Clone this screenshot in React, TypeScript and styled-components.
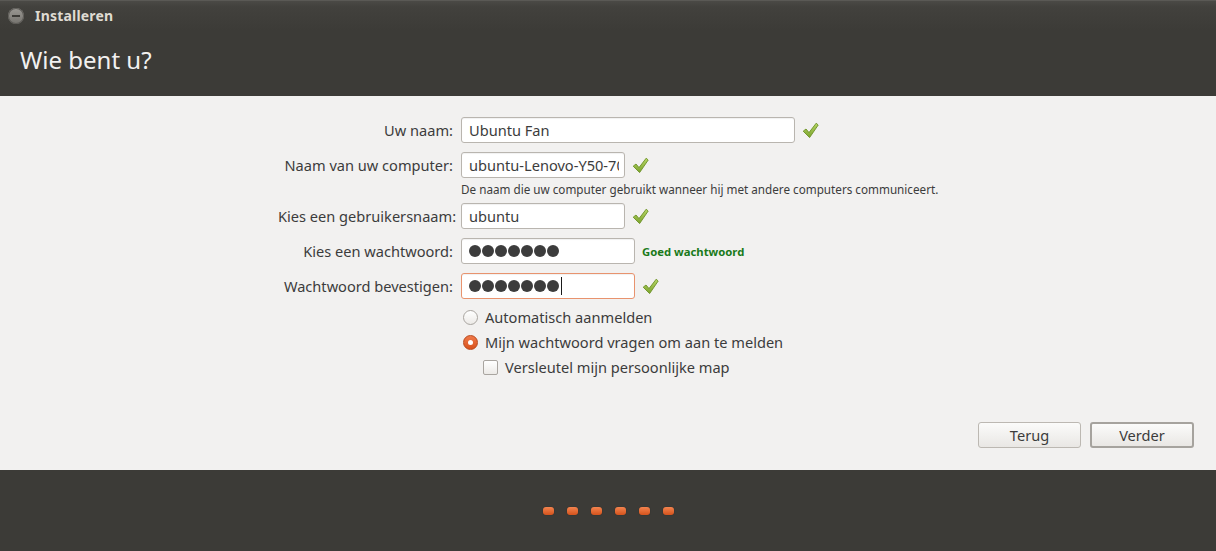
import React from "react";
import styled, { createGlobalStyle } from "styled-components";

const Global = createGlobalStyle`
  html, body { margin: 0; padding: 0; }
  body {
    width: 1216px;
    height: 551px;
    overflow: hidden;
    font-family: "Noto Sans", "DejaVu Sans", sans-serif;
    background: #f2f1f0;
    color: #3c3c3c;
  }
`;

const Window = styled.div`
  width: 1216px;
  height: 551px;
  display: flex;
  flex-direction: column;
`;

const Header = styled.header`
  height: 96px;
  background: #3c3b37;
  display: flex;
  flex-direction: column;
`;

const TitleBar = styled.div`
  height: 30px;
  display: flex;
  align-items: center;
  gap: 11px;
  padding-left: 8px;
  background: linear-gradient(#4b4a46 0px, #42413d 6px, #3c3b37 30px);
  border-top: 1px solid #5a5955;
  box-sizing: border-box;
`;

const WinButton = styled.div`
  width: 16px;
  height: 16px;
  border-radius: 50%;
  background: linear-gradient(#9a9893, #75736e);
  box-shadow: inset 0 0 0 1px #5d5b57;
  display: flex;
  align-items: center;
  justify-content: center;
  &::after {
    content: "";
    width: 8px;
    height: 2px;
    background: #3c3b37;
  }
`;

const WinTitle = styled.span`
  font-family: "Noto Sans", sans-serif;
  font-weight: 700;
  font-size: 14px;
  color: #dfdbd2;
  letter-spacing: 0.2px;
`;

const Heading = styled.h1`
  margin: 0;
  padding: 13px 0 0 20px;
  font-family: "Noto Sans", sans-serif;
  font-weight: 400;
  font-size: 24px;
  color: #f2f1f0;
`;

const Main = styled.main`
  flex: 1;
  display: flex;
  flex-direction: column;
  justify-content: space-between;
  background: #f2f1f0;
`;

const Form = styled.div`
  display: flex;
  flex-direction: column;
  padding: 21px 0 0 278px;
`;

const Row = styled.div<{ $mt?: number; $h?: number }>`
  display: flex;
  align-items: center;
  gap: 8px;
  margin-top: ${(p) => p.$mt ?? 0}px;
  height: ${(p) => p.$h ?? 26}px;
`;

const Label = styled.label`
  width: 175px;
  text-align: right;
  font-size: 14.6px;
  color: #3c3c3c;
  white-space: nowrap;
`;

const Field = styled.div<{ $indent?: number }>`
  display: flex;
  align-items: center;
  gap: 7px;
  padding-left: ${(p) => p.$indent ?? 0}px;
`;

const Input = styled.div<{ $w: number; $warn?: boolean }>`
  width: ${(p) => p.$w}px;
  height: 26px;
  box-sizing: border-box;
  border: 1px solid ${(p) => (p.$warn ? "#e8936e" : "#b9b5af")};
  border-radius: 3px;
  background: #ffffff;
  box-shadow: inset 0 1px 1px rgba(0, 0, 0, 0.06);
  display: flex;
  align-items: center;
  padding-left: 7px;
  padding-right: 5px;
  overflow: hidden;
  white-space: nowrap;
  font-size: 14.6px;
  color: #3c3c3c;
`;

const InputText = styled.span`
  display: block;
  overflow: hidden;
  white-space: nowrap;
  width: 100%;
`;

const Dots = styled.div`
  display: flex;
  align-items: center;
  gap: 1px;
`;

const Dot = styled.span`
  width: 12px;
  height: 12px;
  border-radius: 50%;
  background: #3c3c3c;
`;

const Caret = styled.span`
  width: 1px;
  height: 18px;
  background: #1a1a1a;
  margin-left: 1px;
`;

const Hint = styled.div`
  margin-left: 183px;
  margin-top: 4px;
  height: 14px;
  line-height: 14px;
  font-size: 11.7px;
  color: #3c3c3c;
`;

const Strength = styled.span`
  font-size: 11.3px;
  font-weight: 700;
  color: #1a7a1a;
`;

const Option = styled.label`
  display: flex;
  align-items: center;
  gap: 7px;
  font-size: 14.6px;
  color: #3c3c3c;
`;

const Radio = styled.span<{ $on?: boolean }>`
  width: 15px;
  height: 15px;
  box-sizing: border-box;
  border-radius: 50%;
  border: 1px solid ${(p) => (p.$on ? "#b8481c" : "#a9a5a0")};
  background: ${(p) =>
    p.$on ? "linear-gradient(#f07a4a, #d8521c)" : "linear-gradient(#ffffff, #eceae7)"};
  display: flex;
  align-items: center;
  justify-content: center;
  margin-left: 2px;
  &::after {
    content: "";
    display: ${(p) => (p.$on ? "block" : "none")};
    width: 5px;
    height: 5px;
    border-radius: 50%;
    background: #ffffff;
  }
`;

const Check = styled.span`
  width: 15px;
  height: 15px;
  box-sizing: border-box;
  border-radius: 2px;
  border: 1px solid #a9a5a0;
  background: linear-gradient(#ffffff, #eceae7);
  margin-left: 2px;
`;

const Buttons = styled.div`
  display: flex;
  justify-content: flex-end;
  gap: 9px;
  padding: 0 22px 22px 0;
`;

const Button = styled.button<{ $default?: boolean }>`
  width: ${(p) => (p.$default ? 104 : 103)}px;
  height: 26px;
  box-sizing: border-box;
  border-radius: 3px;
  border: ${(p) => (p.$default ? "2px solid #a6a39e" : "1px solid #bcb8b2")};
  background: linear-gradient(#fbfbfa, #e9e7e4);
  font-family: "Noto Sans", sans-serif;
  font-size: 14.6px;
  color: #3c3c3c;
  padding: 0;
`;

const Footer = styled.footer`
  height: 81px;
  background: #3c3b37;
  display: flex;
  justify-content: center;
  align-items: center;
  gap: 13px;
`;

const Step = styled.span`
  width: 11px;
  height: 8px;
  border-radius: 3px;
  background: linear-gradient(#f4844f, #d4531c);
  box-shadow: 0 0 1px rgba(0, 0, 0, 0.5);
`;

const Tick = () => (
  <svg width="17" height="17" viewBox="0 0 17 17">
    <defs>
      <linearGradient id="tg" x1="0" y1="0" x2="0" y2="1">
        <stop offset="0" stopColor="#b8d766" />
        <stop offset="1" stopColor="#7aa22c" />
      </linearGradient>
    </defs>
    <path
      d="M1.2 9.2 L4 7 L7 10.6 L14.2 1.2 L16.2 3 L7.6 15.6 Z"
      fill="url(#tg)"
      stroke="#6b9124"
      strokeWidth="0.9"
      strokeLinejoin="round"
    />
  </svg>
);

const Password = ({ caret }: { caret?: boolean }) => (
  <Dots>
    {Array.from({ length: 7 }).map((_, i) => (
      <Dot key={i} />
    ))}
    {caret && <Caret />}
  </Dots>
);

export default function App() {
  return (
    <>
      <Global />
      <Window>
        <Header>
          <TitleBar>
            <WinButton />
            <WinTitle>Installeren</WinTitle>
          </TitleBar>
          <Heading>Wie bent u?</Heading>
        </Header>
        <Main>
          <Form>
            <Row>
              <Label>Uw naam:</Label>
              <Field>
                <Input $w={334}>Ubuntu Fan</Input>
                <Tick />
              </Field>
            </Row>
            <Row $mt={9}>
              <Label>Naam van uw computer:</Label>
              <Field>
                <Input $w={164}>
                  <InputText>ubuntu-Lenovo-Y50-70</InputText>
                </Input>
                <Tick />
              </Field>
            </Row>
            <Hint>De naam die uw computer gebruikt wanneer hij met andere computers communiceert.</Hint>
            <Row $mt={7}>
              <Label>Kies een gebruikersnaam:</Label>
              <Field>
                <Input $w={164}>ubuntu</Input>
                <Tick />
              </Field>
            </Row>
            <Row $mt={9}>
              <Label>Kies een wachtwoord:</Label>
              <Field>
                <Input $w={174}>
                  <Password />
                </Input>
                <Strength>Goed wachtwoord</Strength>
              </Field>
            </Row>
            <Row $mt={9}>
              <Label>Wachtwoord bevestigen:</Label>
              <Field>
                <Input $w={174} $warn>
                  <Password caret />
                </Input>
                <Tick />
              </Field>
            </Row>
            <Row $mt={8} $h={20}>
              <Label />
              <Field>
                <Option>
                  <Radio />
                  Automatisch aanmelden
                </Option>
              </Field>
            </Row>
            <Row $mt={5} $h={20}>
              <Label />
              <Field>
                <Option>
                  <Radio $on />
                  Mijn wachtwoord vragen om aan te melden
                </Option>
              </Field>
            </Row>
            <Row $mt={5} $h={20}>
              <Label />
              <Field $indent={20}>
                <Option>
                  <Check />
                  Versleutel mijn persoonlijke map
                </Option>
              </Field>
            </Row>
          </Form>
          <Buttons>
            <Button>Terug</Button>
            <Button $default>Verder</Button>
          </Buttons>
        </Main>
        <Footer>
          {Array.from({ length: 6 }).map((_, i) => (
            <Step key={i} />
          ))}
        </Footer>
      </Window>
    </>
  );
}
